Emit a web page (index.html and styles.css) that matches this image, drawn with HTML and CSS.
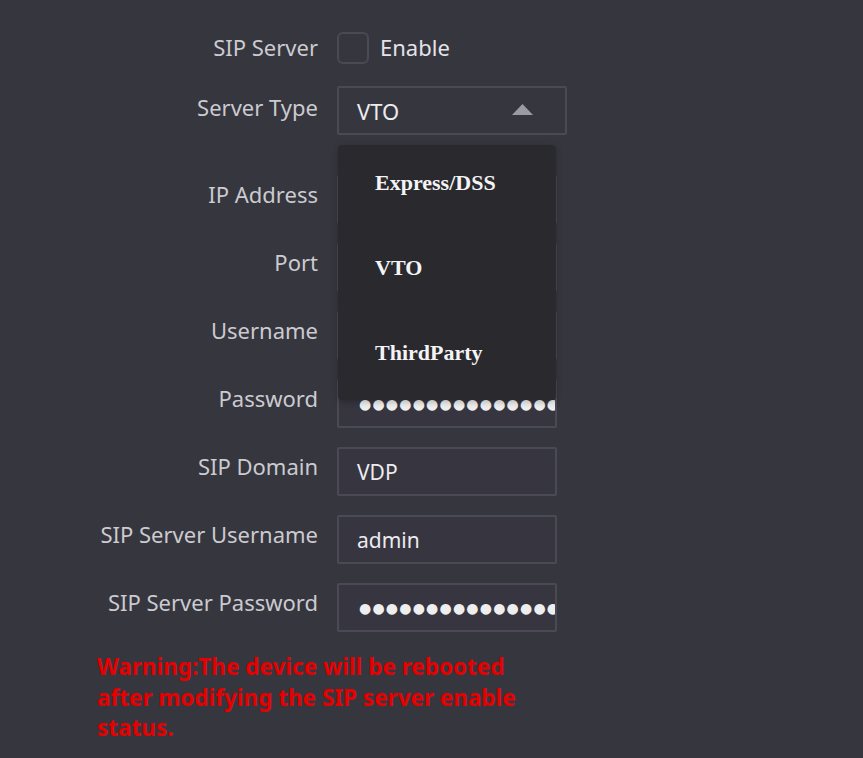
FILE: index.html
```html
<!DOCTYPE html>
<html lang="en">
<head>
    <meta charset="UTF-8">
    <title>SIP Server</title>
    <link rel="stylesheet" href="styles.css">
</head>
<body>
    <div class="panel">
        <div class="row row-check">
            <label class="field-label">SIP Server</label>
            <div class="check-wrap">
                <span class="checkbox"></span>
                <span class="check-text">Enable</span>
            </div>
        </div>

        <div class="row row-select">
            <label class="field-label">Server Type</label>
            <div class="select-wrap">
                <div class="select">
                    <span>VTO</span>
                    <svg class="caret" width="21" height="11" viewBox="0 0 21 11"><polygon points="10.5,0 21,11 0,11" fill="#9b9ba6"/></svg>
                </div>
                <ul class="dropdown">
                    <li>Express/DSS</li>
                    <li>VTO</li>
                    <li>ThirdParty</li>
                </ul>
            </div>
        </div>

        <div class="row">
            <label class="field-label">IP Address</label>
            <div class="input"></div>
        </div>
        <div class="row">
            <label class="field-label">Port</label>
            <div class="input"></div>
        </div>
        <div class="row">
            <label class="field-label">Username</label>
            <div class="input"></div>
        </div>
        <div class="row">
            <label class="field-label">Password</label>
            <div class="input"><span class="dots">●●●●●●●●●●●●●●●●</span></div>
        </div>
        <div class="row">
            <label class="field-label">SIP Domain</label>
            <div class="input">VDP</div>
        </div>
        <div class="row">
            <label class="field-label">SIP Server Username</label>
            <div class="input">admin</div>
        </div>
        <div class="row">
            <label class="field-label">SIP Server Password</label>
            <div class="input"><span class="dots">●●●●●●●●●●●●●●●●</span></div>
        </div>

        <p class="warning">Warning:The device will be rebooted after modifying the SIP server enable status.</p>
    </div>
</body>
</html>
```

FILE: styles.css
```css
body {
    margin: 0;
    background-color: #36363f;
    font-family: "Noto Sans", "Open Sans", sans-serif;
    color: #d9d9de;
    height: 758px;
    overflow: hidden;
}
.panel {
    padding: 32px 0 0 97px;
}
.row {
    display: flex;
    align-items: center;
    margin-bottom: 19px;
}
.row-check {
    height: 32px;
    margin-bottom: 22px;
}
.row-select {
    margin-bottom: 40px;
}
.field-label {
    width: 221px;
    margin-right: 19px;
    text-align: right;
    font-size: 22px;
    color: #cbcbd0;
    padding-bottom: 12px;
}
.row-check .field-label {
    padding-bottom: 2px;
}
.row-select .field-label {
    padding-bottom: 8px;
}
.check-wrap {
    display: flex;
    align-items: center;
}
.checkbox {
    width: 28px;
    height: 28px;
    border: 2px solid #4a4a55;
    border-radius: 6px;
    margin-right: 11px;
}
.check-text {
    font-size: 22px;
    color: #e4e4e8;
    padding-bottom: 2px;
}
.select-wrap {
    position: relative;
}
.select {
    height: 45px;
    width: 176px;
    border: 2px solid #4a4a55;
    border-radius: 2px;
    display: flex;
    align-items: center;
    justify-content: space-between;
    padding: 0 32px 0 18px;
    font-size: 22px;
    color: #ececf0;
}
.caret {
    margin-bottom: 2px;
}
.dropdown {
    position: absolute;
    top: 59px;
    left: 1px;
    width: 218px;
    margin: 0;
    padding: 0;
    list-style: none;
    background-color: #29292e;
    border-radius: 4px;
    box-shadow: 0 2px 6px rgba(0, 0, 0, 0.25);
    z-index: 2;
}
.dropdown li {
    height: 85px;
    line-height: 76px;
    padding-left: 37px;
    font-family: "Liberation Serif", serif;
    font-weight: bold;
    font-size: 22px;
    color: #f4f4f6;
}
.input {
    width: 198px;
    height: 45px;
    border: 2px solid #4a4a55;
    border-radius: 2px;
    background-color: #37353f;
    padding-left: 18px;
    display: flex;
    align-items: center;
    font-size: 21px;
    color: #ececf0;
    overflow: hidden;
    white-space: nowrap;
}
.dots {
    font-family: "DejaVu Sans", sans-serif;
    font-size: 14px;
    letter-spacing: 1.2px;
    color: #eeeeee;
    padding-left: 2px;
}
.warning {
    margin: 20px 0 0 0;
    width: 434px;
    font-size: 22.5px;
    font-weight: bold;
    line-height: 30.5px;
    color: #e60000;
}
```
